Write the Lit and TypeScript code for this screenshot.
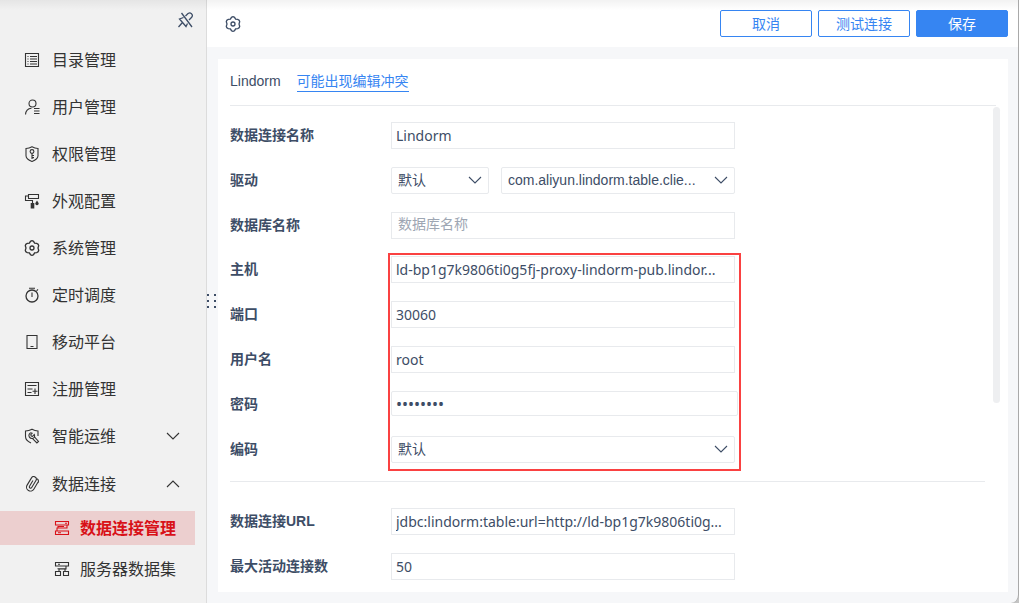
import { LitElement, html, css, svg } from "lit";
import { customElement, property } from "lit/decorators.js";

const glyphs: Record<string, unknown> = {
  list: svg`<path d="M1.5 1.5h13v13h-13z"/><path d="M3.5 4.5h1M6 4.5h7M3.5 7h1M6 7h7M3.5 9.5h1M6 9.5h7M3.5 12h1M6 12h7"/>`,
  user: svg`<circle cx="8.5" cy="4.5" r="3.5"/><path d="M1.5 15.5c.2-3.600 2.500-6 6-6.300M10 9.500h5.500M10 12h5.500M10 14.500h5.500"/>`,
  shield: svg`<path d="M8 .8c2 1.200 4 1.700 6 1.700v7.300c0 2.500-2.800 4.500-6 5.600-3.200-1.100-6-3.100-6-5.600V2.500c2 0 4-.5 6-1.700z"/><circle cx="8" cy="5.500" r="1.900"/><path d="M8 7.400v5.600M8 9.500h2M8 11.600h2"/>`,
  roller: svg`<path d="M4.500 1.500h10v4h-10zM4.500 3h-3v4.500h7V10"/><path class="solid" d="M6.700 10h3.600v5.500H6.700zM13 7.500l1.600 2.500a1.700 1.700 0 1 1-3.200 0z"/>`,
  gear: svg`<path class="bold" d="M6.500 1.300Q8 .2 9.500 1.300l1.100 1.900 2.100.1q1.900.6 2 2.300L14 8l.7 2.400q-.1 1.700-2 2.300l-2.100.1-1.100 1.900q-1.500 1.100-3 0l-1.100-1.900-2.100-.1q-1.900-.6-2-2.300L2 8l-.7-2.400q.1-1.700 2-2.300l2.100-.1z"/><circle class="bold" cx="8" cy="8" r="2"/>`,
  timer: svg`<circle class="bold" cx="8" cy="9" r="6"/><path d="M8 5.500V10M5 1.200h6M12.600 3.800l1.400-1.400"/>`,
  phone: svg`<path d="M3 1.500h10v13H3zM6.500 12.500h3"/>`,
  register: svg`<path d="M1.500 1.500h13v13h-13zM3.500 4.500h9M3.500 8h5M3.500 11.500h4M11 7.500v5.500M8.500 10.300h5"/>`,
  wrench: svg`<path d="M7 15c-3.200-1.500-5.500-3.600-5.500-6.500V3C4 2.900 6 2.300 8 1.200c2 1.100 4 1.700 6 1.800v5"/><path d="M7.500 4.500a3 3 0 1 0 3 4.500l4 4.500-1.600 1.500-4.600-4.600M8.500 4.800L6.800 6.600l.4 1.400 1.400.3 1.700-1.900c.4.9.4 1.700.2 2.600"/>`,
  clip: svg`<path transform="rotate(31 8 8)" d="M12.200 3.800v7.700a3.900 3.900 0 0 1-7.800 0V3a2.600 2.600 0 0 1 5.200 0v8.200a1.300 1.300 0 0 1-2.600 0V4.500M12.200 4.500A2.600 2.600 0 0 0 9.600.9"/>`,
  link: svg`<path d="M1.500 1.500h13v3.500h-13zM11 3.300h2M13 5v3H3v3M4 8V6.500h6M1.500 11h13v3.500h-13zM4 12.800h3"/>`,
  dataset: svg`<path d="M1.500 1.500h13v3.500h-13zM4 3.300h2M12 5v3H5v2.500M3.500 7.800h9M11 8v2.500M1.500 10.500h5v4h-5zM9.500 10.500h5v4h-5z"/>`,
  unpin: svg`<path class="bold" d="M4.500 1L15 15M6.500 5.500L2.500 7 9 14.500l1.500-3M8.500 4L11 1.500q3-1.500 4.200 1.200.5 1.500-.5 2.500L12 8M5 11l-3.500 4"/>`,
  down: svg`<path d="M2 5l6 6 6-6"/>`,
  up: svg`<path d="M2 11l6-6 6 6"/>`,
};

@customElement("ui-icon")
class UiIcon extends LitElement {
  @property() name = "";
  static styles = css`
    :host { display: inline-flex; flex: none; width: 16px; height: 16px; }
    svg { width: 100%; height: 100%; fill: none; stroke: currentColor; stroke-width: 1.1; }
    .bold { stroke-width: 1.3; }
    .solid { fill: currentColor; stroke: none; }
  `;
  render() {
    return html`<svg viewBox="0 0 16 16" aria-hidden="true">${glyphs[this.name]}</svg>`;
  }
}

const menu = [
  { icon: "list", text: "目录管理" },
  { icon: "user", text: "用户管理" },
  { icon: "shield", text: "权限管理" },
  { icon: "roller", text: "外观配置" },
  { icon: "gear", text: "系统管理" },
  { icon: "timer", text: "定时调度" },
  { icon: "phone", text: "移动平台" },
  { icon: "register", text: "注册管理" },
  { icon: "wrench", text: "智能运维", arrow: "down" },
  { icon: "clip", text: "数据连接", arrow: "up" },
];

@customElement("app-root")
class AppRoot extends LitElement {
  static styles = css`
    :host {
      display: block;
      height: 100vh;
      background: #c4c4c4;
      font-family: "Liberation Sans", "Noto Sans CJK SC", sans-serif;
      font-size: 14px;
      color: #3d4d66;
    }
    *, *::before, *::after { box-sizing: border-box; }
    .shell {
      position: relative;
      display: grid;
      grid-template-columns: 207px minmax(0, 1fr);
      height: 100%;
      overflow: hidden;
      background: #f6f7f9;
      border-right: 1px solid #a9a9a9;
      border-bottom-right-radius: 8px;
    }
    .shell::before {
      content: "";
      position: absolute;
      z-index: 1;
      inset: 0 0 auto 0;
      height: 10px;
      background: linear-gradient(rgba(0, 0, 0, 0.05), rgba(0, 0, 0, 0));
      pointer-events: none;
    }
    .side { background: #f1f1f1; border-right: 1px solid #dcdcdc; color: #333; font-size: 16px; }
    .pin { display: flex; justify-content: flex-end; height: 36px; padding: 12px 13px 0 0; }
    button { font: inherit; color: inherit; cursor: pointer; }
    .plain { border: 0; padding: 0; background: none; display: flex; color: #3d4d66; height: 16px; }
    ul { list-style: none; margin: 0; padding: 0; }
    .item {
      display: flex;
      align-items: center;
      height: 47px;
      padding: 0 25px 0 24px;
      gap: 12px;
      color: inherit;
      text-decoration: none;
    }
    .item.fold { height: 48px; }
    .item span { flex: 1; }
    .item span, .leaf span { padding-bottom: 2px; }
    .sub { display: grid; gap: 7px; padding: 3px 11px 0 0; }
    .leaf {
      display: flex;
      align-items: center;
      height: 34px;
      gap: 10px;
      padding-left: 54px;
      color: inherit;
      text-decoration: none;
    }
    .leaf.on { background: #eccfcf; color: #d81118; font-weight: 700; }
    .main { position: relative; display: flex; flex-direction: column; min-width: 0; }
    .bar {
      display: flex;
      align-items: center;
      gap: 6px;
      height: 47px;
      padding: 0 10px 0 18px;
      background: #fff;
    }
    .bar .plain { margin-right: auto; }
    .btn {
      width: 92px;
      height: 27px;
      padding: 0 0 2px;
      border: 1px solid #3685f2;
      border-radius: 2px;
      background: #fff;
      color: #3685f2;
    }
    .btn.primary { background: #3685f2; color: #fff; }
    .grip {
      position: absolute;
      left: 0;
      top: 294px;
      width: 9px;
      height: 14px;
      background: radial-gradient(circle at 1px 1px, #3d4d66 1px, transparent 1px) 0 0 / 7px 6px;
    }
    .panel {
      flex: 1;
      display: flex;
      flex-direction: column;
      min-height: 0;
      margin: 12px 10px 11px 11px;
      padding: 0 12px;
      background: #fff;
    }
    .title {
      display: flex;
      align-items: center;
      gap: 16px;
      height: 47px;
      padding-bottom: 2px;
      border-bottom: 1px solid #e8eaed;
    }
    .title a { color: #3685f2; text-decoration: none; border-bottom: 1px solid #3685f2; line-height: 20px; }
    .scroll-wrap { position: relative; flex: 1; min-height: 0; display: flex; margin-right: -4px; }
    .scroll { flex: 1; min-height: 0; overflow: hidden; padding: 16px 8px 0 0; }
    .thumb { flex: none; width: 7px; height: 296px; margin-top: 1px; border-radius: 4px; background: #eeeff1; }
    .group { display: grid; gap: 18px; }
    .row { display: grid; grid-template-columns: 161px 344px; align-items: center; height: 27px; }
    .row label { font-weight: 700; padding-bottom: 4px; }
    .pair { display: grid; grid-template-columns: 98px 1fr; gap: 12px; }
    .marked { position: relative; margin-top: 17px; }
    .marked::after {
      content: "";
      position: absolute;
      left: 158px;
      top: -3px;
      width: 353px;
      bottom: -8px;
      border: 2px solid #fa4141;
      pointer-events: none;
    }
    .field {
      width: 100%;
      height: 27px;
      margin: 0;
      padding: 0 4px;
      border: 1px solid #e8eaed;
      border-radius: 0;
      background: #fff;
      color: #3d4d66;
      font: 14px "Noto Sans", "Noto Sans CJK SC", sans-serif;
      outline: 0;
    }
    .field::placeholder { color: #9ea6b3; }
    .field.hint { padding: 0 6px 4px; }
    .field[type="password"] { width: 347px; height: 25px; align-self: start; border-radius: 2px; font-size: 16px; }
    .pick { position: relative; display: block; }
    .pick select {
      appearance: none;
      width: 100%;
      height: 27px;
      padding: 0 30px 2px 6px;
      border: 1px solid #e8eaed;
      border-radius: 2px;
      background: #fff;
      color: #3d4d66;
      font: 14px "Liberation Sans", "Noto Sans CJK SC", sans-serif;
      outline: 0;
    }
    .pick ui-icon { position: absolute; right: 6px; top: 5px; pointer-events: none; }
    hr { height: 1px; margin: 18px 0 26px; border: 0; background: #e8eaed; }
  `;

  text(id: string, label: string, value: string, type = "text") {
    return html`<div class="row">
      <label for=${id}>${label}</label>
      <input class="field" id=${id} type=${type} .value=${value} />
    </div>`;
  }

  render() {
    return html`<div class="shell">
      <nav class="side">
        <div class="pin"><button class="plain" aria-label="取消固定"><ui-icon name="unpin"></ui-icon></button></div>
        <ul>
          ${menu.map(
            (m) => html`<li>
              <a class="item ${m.arrow ? "fold" : ""}" href="#">
                <ui-icon name=${m.icon}></ui-icon><span>${m.text}</span>
                ${m.arrow ? html`<ui-icon name=${m.arrow}></ui-icon>` : ""}
              </a>
            </li>`
          )}
        </ul>
        <ul class="sub">
          <li><a class="leaf on" href="#"><ui-icon name="link"></ui-icon><span>数据连接管理</span></a></li>
          <li><a class="leaf" href="#"><ui-icon name="dataset"></ui-icon><span>服务器数据集</span></a></li>
        </ul>
      </nav>
      <main class="main">
        <header class="bar">
          <button class="plain" aria-label="设置"><ui-icon name="gear"></ui-icon></button>
          <button class="btn">取消</button>
          <button class="btn">测试连接</button>
          <button class="btn primary">保存</button>
        </header>
        <div class="grip"></div>
        <section class="panel">
          <div class="title"><span>Lindorm</span><a href="#">可能出现编辑冲突</a></div>
          <div class="scroll-wrap">
            <form class="scroll">
              <div class="group">
                ${this.text("name", "数据连接名称", "Lindorm")}
                <div class="row">
                  <label for="driver">驱动</label>
                  <div class="pair">
                    <span class="pick"><select id="driver"><option>默认</option></select><ui-icon name="down"></ui-icon></span>
                    <span class="pick"><select aria-label="驱动"><option>com.aliyun.lindorm.table.clie...</option></select><ui-icon name="down"></ui-icon></span>
                  </div>
                </div>
                <div class="row">
                  <label for="db">数据库名称</label>
                  <input class="field hint" id="db" placeholder="数据库名称" />
                </div>
              </div>
              <div class="group marked">
                ${this.text("host", "主机", "ld-bp1g7k9806ti0g5fj-proxy-lindorm-pub.lindor...")}
                ${this.text("port", "端口", "30060")}
                ${this.text("user", "用户名", "root")}
                ${this.text("pass", "密码", "password", "password")}
                <div class="row">
                  <label for="enc">编码</label>
                  <span class="pick"><select id="enc"><option>默认</option></select><ui-icon name="down"></ui-icon></span>
                </div>
              </div>
              <hr />
              <div class="group">
                ${this.text("url", "数据连接URL", "jdbc:lindorm:table:url=http://ld-bp1g7k9806ti0g...")}
                ${this.text("max", "最大活动连接数", "50")}
              </div>
            </form>
            <div class="thumb"></div>
          </div>
        </section>
      </main>
    </div>`;
  }
}
